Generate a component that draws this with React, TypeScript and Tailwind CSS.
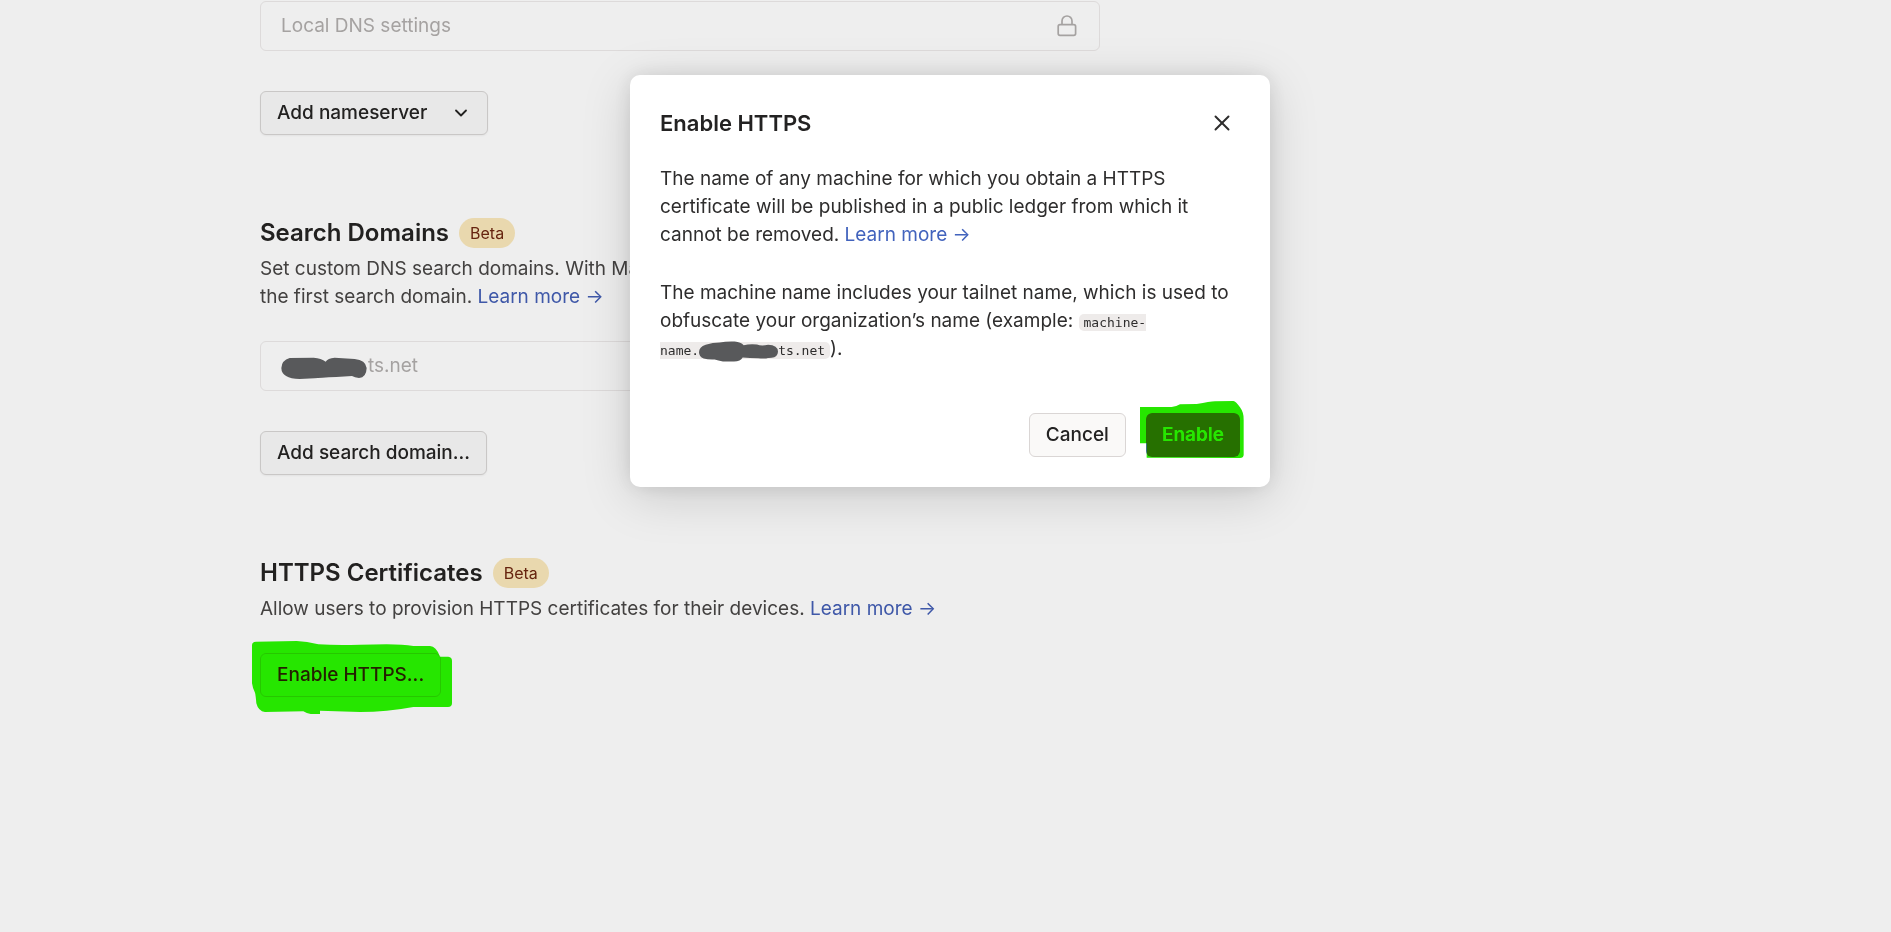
import type { ReactNode } from "react";
import { ChevronDown, X } from "lucide-react";

function Badge({ children }: { children: ReactNode }) {
  return (
    <span className="flex h-[30px] items-center rounded-full bg-[#e9d8ae] px-[11px] text-base text-[#66240f]">
      {children}
    </span>
  );
}

function LearnMore({ className }: { className: string }) {
  return (
    <a href="#learn-more" className={className}>
      Learn more →
    </a>
  );
}

function SectionHeading({ title }: { title: string }) {
  return (
    <div className="flex items-center gap-2.5">
      <h2 className="text-2xl leading-[30px] font-semibold text-[#222120]">{title}</h2>
      <Badge>Beta</Badge>
    </div>
  );
}

function Row({ children }: { children: ReactNode }) {
  return (
    <div className="flex h-[50px] max-w-[840px] items-center rounded-md border border-[#dddada] px-5 text-[#a5a2a1]">
      {children}
    </div>
  );
}

const pageButton =
  "flex h-11 items-center rounded-md border border-[#c9c7c6] bg-[#e8e8e8] px-4 font-medium text-[#222120] shadow-xs";

function LockIcon() {
  return (
    <svg width="20" height="22" viewBox="0 0 20 22" fill="none" stroke="currentColor" strokeWidth="1.7" className="ml-auto mr-0.5">
      <rect x="1.2" y="9.6" width="17.4" height="10.8" rx="1.8" />
      <path d="M5 9.4V6a5 5 0 0 1 10 0v3.4" />
    </svg>
  );
}

function EnableHttpsDialog() {
  return (
    <div className="fixed inset-0 flex items-start justify-center pt-[75px] pl-[9px]">
      <div
        role="dialog"
        aria-modal="true"
        aria-labelledby="dialog-title"
        className="w-full max-w-[640px] rounded-[10px] bg-white p-[30px] text-[#2e2d2d] shadow-[0_10px_50px_rgba(0,0,0,0.15),0_0_20px_rgba(0,0,0,0.1)]"
      >
        <div className="flex h-9 items-center justify-between">
          <h1 id="dialog-title" className="text-[22px] font-semibold text-[#232222]">
            Enable HTTPS
          </h1>
          <button type="button" aria-label="Close" className="flex size-9 items-center justify-center">
            <X size={26} strokeWidth={1.8} />
          </button>
        </div>
        <p className="mt-6">
          The name of any machine for which you obtain a HTTPS certificate will be published in a public ledger from
          which it cannot be removed. <LearnMore className="text-[#4263bd]" />
        </p>
        <p className="mt-[30px]">
          The machine name includes your tailnet name, which is used to obfuscate your organization’s name (example:{" "}
          <code className="rounded-[5px] bg-[#eeebea] px-[5px] py-px font-['DejaVu_Sans_Mono',monospace] text-[13px] leading-none">
            machine-
            <wbr />
            <span className="whitespace-nowrap">
              name.
              <svg width="79" height="21" viewBox="238 846 237 62" className="-my-2 inline-block align-middle">
                <path
                  fill="#58595b"
                  d="M238 879Q238 864 258 857Q280 850 300 850Q320 846 345 847Q364 849 372 858Q390 854 412 856Q425 862 445 857Q475 858 475 878Q474 895 456 896Q435 899 415 897Q390 897 369 895Q362 908 340 907L310 907Q295 904 285 901Q265 902 252 898Q238 892 238 879Z"
                />
              </svg>
              ts.net
            </span>
          </code>
          ).
        </p>
        <div className="mt-[50px] flex justify-end gap-5">
          <button
            type="button"
            className="h-11 rounded-md border border-[#dad6d5] bg-[#faf9f8] px-4 font-medium text-[#232222]"
          >
            Cancel
          </button>
          <div className="relative">
            <button type="button" className="h-11 rounded-md bg-[#4b70cc] px-4 font-semibold text-white">
              Enable
            </button>
            <svg
              width="104"
              height="57"
              viewBox="480 93 312 171"
              className="pointer-events-none absolute -top-3 -left-1.5 max-w-none mix-blend-darken"
            >
              <path
                fill="#26e600"
                d="M480 111H575Q590 110 600 103L650 102Q690 95 705 94L760 93Q768 94 780 112Q792 128 791 150V255Q790 264 780 264L500 263V220H480Z"
              />
            </svg>
          </div>
        </div>
      </div>
    </div>
  );
}

export default function App() {
  return (
    <div className="min-h-screen bg-[#eeeeee] font-['Inter',sans-serif] text-[19px] leading-7 text-[#434140]">
      <main className="mx-auto max-w-[1371px] pt-px">
        <Row>
          Local DNS settings
          <LockIcon />
        </Row>
        <button type="button" className={`${pageButton} mt-10 gap-6`}>
          Add nameserver
          <ChevronDown size={20} strokeWidth={2.2} />
        </button>

        <section className="mt-[83px]">
          <SectionHeading title="Search Domains" />
          <p className="mt-[7px]">
            Set custom DNS search domains. With MagicDNS,
            <br />
            the first search domain. <LearnMore className="text-[#3f58a8]" />
          </p>
          <div className="mt-[30px]">
            <Row>
              <svg width="86" height="22" viewBox="125 472 256 66" className="mt-1 mr-px shrink-0">
                <path
                  fill="#58595b"
                  d="M125 505Q126 482 150 475L222 474Q245 476 258 486Q264 475 285 474L345 478Q378 481 381 505Q380 534 358 535Q345 534 337 529L290 532Q240 534 225 536L180 538Q126 537 125 505Z"
                />
              </svg>
              ts.net
            </Row>
          </div>
          <button type="button" className={`${pageButton} mt-10`}>
            Add search domain...
          </button>
        </section>

        <section className="mt-[83px]">
          <SectionHeading title="HTTPS Certificates" />
          <p className="mt-[7px]">
            Allow users to provision HTTPS certificates for their devices. <LearnMore className="text-[#3f58a8]" />
          </p>
          <div className="relative mt-[30px] w-fit">
            <button type="button" className={pageButton}>
              Enable HTTPS...
            </button>
            <svg
              width="201"
              height="74"
              viewBox="36 303 603 222"
              className="pointer-events-none absolute -top-3 -left-2 max-w-none mix-blend-darken"
            >
              <path
                fill="#26e600"
                d="M36 316Q36 305 48 305L170 303Q200 304 235 313Q290 316 360 314L440 313Q490 314 520 318L570 318Q588 318 600 350L625 350Q636 351 636 362V490Q636 501 624 501L520 501Q440 516 360 516L240 512V522H212Q200 521 190 514L75 516Q55 514 49 490Q47 465 45 458Q38 445 36 430Z"
              />
            </svg>
          </div>
        </section>
      </main>
      <EnableHttpsDialog />
    </div>
  );
}
